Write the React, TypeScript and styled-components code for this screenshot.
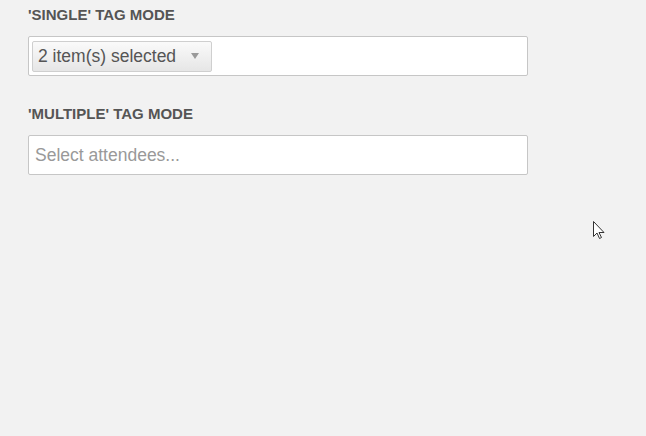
import React from 'react';
import styled, { createGlobalStyle } from 'styled-components';

/***** STYLES *****/
const GlobalStyle = createGlobalStyle`
    html, body {
        margin: 0;
        padding: 0;
        background: #f2f2f2;
        font-family: "Liberation Sans", Arial, sans-serif;
    }
`;

const Page = styled.div`
    position: relative;
    width: 646px;
    height: 436px;
    padding: 6px 0 0 28px;
    box-sizing: border-box;
    overflow: hidden;
`;

const Section = styled.div`
    margin-bottom: 29px;
`;

const Label = styled.h4`
    margin: 0 0 13px 0;
    font-size: 15px;
    font-weight: bold;
    line-height: 17px;
    color: #555;
`;

const Box = styled.div`
    width: 500px;
    height: 40px;
    box-sizing: border-box;
    background: #fff;
    border: 1px solid #c6c6c6;
    border-radius: 2px;
    display: flex;
    align-items: center;
    padding: 0 3px;
`;

const Tag = styled.div`
    display: flex;
    align-items: center;
    height: 31px;
    box-sizing: border-box;
    padding: 0 12px 0 5px;
    border: 1px solid #cfcfcf;
    border-radius: 2px;
    background: linear-gradient(#fafafa, #e6e6e6);
    font-size: 17.5px;
    color: #555;
`;

const Caret = styled.span`
    margin-left: 15px;
    width: 0;
    height: 0;
    border-left: 4px solid transparent;
    border-right: 4px solid transparent;
    border-top: 6px solid #999;
`;

const Placeholder = styled.span`
    padding-left: 3px;
    font-size: 17.5px;
    color: #999;
`;

const Cursor = styled.svg`
    position: absolute;
    left: 593px;
    top: 221px;
`;

/***** COMPONENT-FUNCTION *****/
const App = () => {
    return (
        <Page>
            <GlobalStyle />
            <Section>
                <Label>'SINGLE' TAG MODE</Label>
                <Box>
                    <Tag>
                        2 item(s) selected
                        <Caret />
                    </Tag>
                </Box>
            </Section>
            <Section>
                <Label>'MULTIPLE' TAG MODE</Label>
                <Box>
                    <Placeholder>Select attendees...</Placeholder>
                </Box>
            </Section>
            <Cursor width='13' height='19' viewBox='0 0 13 19'>
                <path
                    d='M0.5 0.5 L0.5 15.5 L4 12 L6.5 17.5 L8.5 16.5 L6 11.5 L11 11.5 Z'
                    fill='#fff'
                    stroke='#333'
                    strokeWidth='1'
                    strokeLinejoin='round'
                />
            </Cursor>
        </Page>
    );
};

/***** EXPORTS *****/
export default App;
